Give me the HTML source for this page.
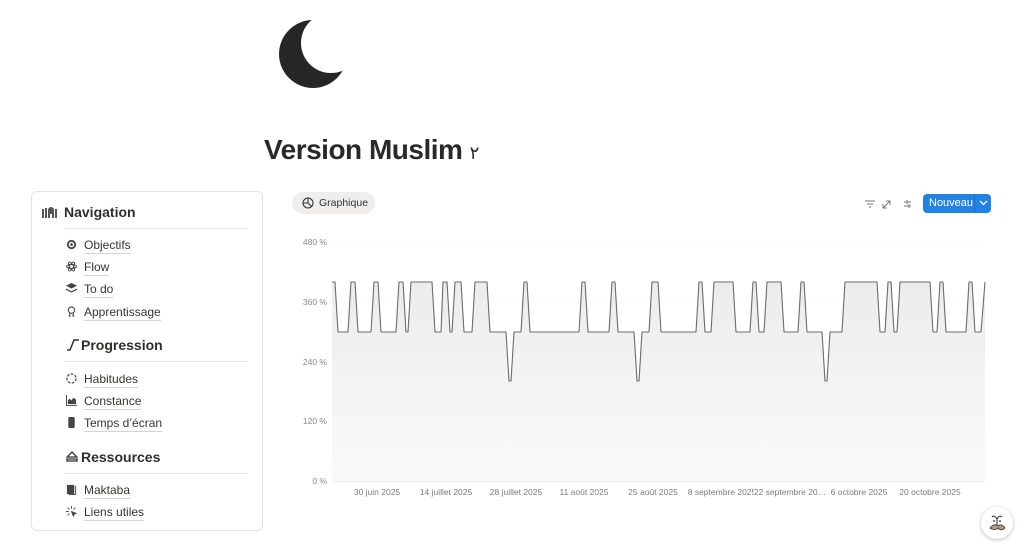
<!DOCTYPE html>
<html><head><meta charset="utf-8"><style>
body{margin:0;width:1024px;height:548px;background:#fff;font-family:"Liberation Sans",sans-serif;color:#37352f;position:relative;overflow:hidden}
.a{position:absolute}
.side{left:31px;top:191px;width:232px;height:340px;border:1px solid #e3e2e0;border-radius:6px;box-sizing:border-box}
.h{font-weight:bold;font-size:14px;color:#2f2e2a}
.sep{height:1px;background:#e8e7e4}
.it{font-size:12px;color:#37352f}
.it span{border-bottom:1px solid #d5d4d0;padding-bottom:1px}
.ic{position:absolute;left:-18px;top:1px;width:11px;height:11px}
.yl{font-size:8.5px;color:#8a8985;text-align:right;width:40px}
.xl{font-size:8.5px;color:#7d7c78;white-space:nowrap;transform:translateX(-50%)}
</style></head><body>
<svg class="a" style="left:276px;top:16px" width="76" height="76" viewBox="0 0 76 76"><defs><mask id="m"><rect width="76" height="76" fill="#fff"/><circle cx="55" cy="27" r="30" fill="#000"/></mask></defs><circle cx="37" cy="38" r="34" fill="#262626" mask="url(#m)"/></svg>
<div class="a" style="left:264px;top:134px;font-size:28px;font-weight:bold;color:#2a2925;letter-spacing:-0.5px">Version Muslim <span style="font-family:'DejaVu Sans',sans-serif;font-size:18px;font-weight:normal">٢</span></div>

<div class="a side">
 <svg class="a" style="left:10px;top:13px" width="16" height="13" viewBox="0 0 16 13"><rect x="0" y="4" width="2" height="9" fill="#555"/><rect x="3" y="3" width="2" height="10" fill="#555"/><path d="M6 13V5a3 3 0 0 1 6 0v8h-2V9H8v4Z" fill="#555"/><rect x="13" y="4" width="2" height="9" fill="#555"/></svg>
 <div class="a h" style="left:32px;top:12px">Navigation</div>
 <div class="a sep" style="left:33px;top:36px;width:183px"></div>
 <div class="a it" style="left:52px;top:46px"><svg class="ic" viewBox="0 0 12 12"><circle cx="6" cy="6" r="5" fill="#444"/><circle cx="6" cy="6" r="3" fill="#fff"/><circle cx="6" cy="6" r="1.5" fill="#444"/></svg><span>Objectifs</span></div>
 <div class="a it" style="left:52px;top:68px"><svg class="ic" viewBox="0 0 12 12" fill="none" stroke="#444" stroke-width="1"><ellipse cx="6" cy="6" rx="5.5" ry="2.2"/><ellipse cx="6" cy="6" rx="5.5" ry="2.2" transform="rotate(60 6 6)"/><ellipse cx="6" cy="6" rx="5.5" ry="2.2" transform="rotate(-60 6 6)"/></svg><span>Flow</span></div>
 <div class="a it" style="left:52px;top:90px"><svg class="ic" viewBox="0 0 12 12" fill="#444"><path d="M6 0L12 3 6 6 0 3Z"/><path d="M0 6l6 3 6-3v1.5L6 10.5 0 7.5Z"/><path d="M0 9l6 3 6-3L6 12Z"/></svg><span>To do</span></div>
 <div class="a it" style="left:52px;top:113px"><svg class="ic" viewBox="0 0 12 12" fill="none" stroke="#444" stroke-width="1.2"><circle cx="6" cy="4.5" r="3.5"/><path d="M4 8v3M8 8v3M3 11h2M7 11h2"/></svg><span>Apprentissage</span></div>
 <svg class="a" style="left:34px;top:147px" width="14" height="12" viewBox="0 0 14 12"><path d="M1 11h3L8 1h5" fill="none" stroke="#333" stroke-width="1.5"/></svg>
 <div class="a h" style="left:49px;top:145px">Progression</div>
 <div class="a sep" style="left:33px;top:169px;width:183px"></div>
 <div class="a it" style="left:52px;top:180px"><svg class="ic" viewBox="0 0 12 12" fill="none" stroke="#444" stroke-width="1.3" stroke-dasharray="3 1.5"><circle cx="6" cy="6" r="5"/></svg><span>Habitudes</span></div>
 <div class="a it" style="left:52px;top:202px"><svg class="ic" viewBox="0 0 12 12" fill="#444"><path d="M0 0h1v11h11v1H0Z"/><path d="M2 10V6l2-2 2 2 2-3 3 2v5Z"/></svg><span>Constance</span></div>
 <div class="a it" style="left:52px;top:224px"><svg class="ic" viewBox="0 0 12 12"><rect x="2.5" y="0" width="7" height="12" rx="1.5" fill="#444"/></svg><span>Temps d’écran</span></div>
 <svg class="a" style="left:34px;top:259px" width="12" height="11" viewBox="0 0 12 11"><path d="M6 1L11 6H1Z M1 8h10v2H1Z" fill="none" stroke="#333" stroke-width="1.3"/></svg>
 <div class="a h" style="left:49px;top:257px">Ressources</div>
 <div class="a sep" style="left:33px;top:281px;width:183px"></div>
 <div class="a it" style="left:52px;top:291px"><svg class="ic" viewBox="0 0 12 12" fill="#444"><path d="M1 1h8v10H1Z"/><path d="M10 2h1v10H3v-1h7Z"/></svg><span>Maktaba</span></div>
 <div class="a it" style="left:52px;top:313px"><svg class="ic" viewBox="0 0 12 12" stroke="#444" stroke-width="1"><path d="M6 0v3M0 6h3M1.8 1.8l2 2M10.2 1.8l-2 2M1.8 10.2l2-2"/><path d="M6 6l5 2-2 1-1 2Z" fill="#444"/></svg><span>Liens utiles</span></div>
</div>

<div class="a" style="left:292px;top:192px;width:83px;height:22px;background:#efeeec;border-radius:11px"></div>
<svg class="a" style="left:302px;top:197px" width="12" height="12" viewBox="0 0 12 12" fill="none" stroke="#333" stroke-width="1.1"><circle cx="6" cy="6" r="5"/><path d="M6 1v5l3.5 3.5M6 6H1"/></svg>
<div class="a" style="left:319px;top:197px;font-size:10.5px;color:#333">Graphique</div>
<svg class="a" style="left:864px;top:197px" width="48" height="14" viewBox="0 0 48 14" fill="none" stroke="#777" stroke-width="1"><path d="M1 4h10M3 7h6M5 10h2"/><path d="M22 4l4-0v4M26 4l-7 7M19 7v4h4"/><path d="M40 5h7M40 9h7M43 3v4M45 7v4"/></svg>
<div class="a" style="left:923px;top:194px;width:68px;height:19px;background:#2383e2;border-radius:4px"></div>
<div class="a" style="left:929px;top:197px;font-size:11px;color:#fff">Nouveau</div>
<div class="a" style="left:974px;top:194px;width:1px;height:19px;background:#1a6dc0"></div>
<svg class="a" style="left:979px;top:200px" width="9" height="6" viewBox="0 0 9 6"><path d="M1 1l3.5 3.5L8 1" fill="none" stroke="#fff" stroke-width="1.3"/></svg>

<svg class="a" style="left:0;top:0" width="1024" height="548">
<defs><linearGradient id="g" x1="0" y1="0" x2="0" y2="1"><stop offset="0" stop-color="#ececec"/><stop offset="1" stop-color="#fafafa"/></linearGradient></defs>
<g stroke="#ececec" stroke-dasharray="1 2" stroke-width="0.8"><path d="M332 242H985M332 302H985M332 362H985M332 421H985"/></g>
<path d="M332 481H985" stroke="#e3e3e3"/>
<path d="M332 282 L335 282 338 332 348 332 351 282 355 282 358 332 371 332 374 282 378 282 381 332 396 332 399 282 403 282 406 332 408 332 411 282 432 282 435 332 441 332 443 282 447 282 450 332 452 332 455 282 461 282 464 332 472 332 475 282 487 282 490 332 506 332 509 381 511 381 514 332 521 332 524 282 527 282 530 332 579 332 582 282 585 282 588 332 609 332 612 282 615 282 618 332 634 332 637 381 639 381 642 332 649 332 652 282 658 282 661 332 696 332 699 282 702 282 705 332 711 332 714 282 733 282 736 332 750 332 753 282 756 282 759 332 764 332 767 282 781 282 784 332 798 332 801 282 804 282 807 332 822 332 825 381 827 381 830 332 842 332 845 282 877 282 880 332 885 332 888 282 891 282 894 332 897 332 900 282 930 282 933 332 937 332 940 282 943 282 946 332 966 332 969 282 972 282 975 332 981 332 985 282 L985 481 L332 481Z" fill="url(#g)"/>
<path d="M332 282 L335 282 338 332 348 332 351 282 355 282 358 332 371 332 374 282 378 282 381 332 396 332 399 282 403 282 406 332 408 332 411 282 432 282 435 332 441 332 443 282 447 282 450 332 452 332 455 282 461 282 464 332 472 332 475 282 487 282 490 332 506 332 509 381 511 381 514 332 521 332 524 282 527 282 530 332 579 332 582 282 585 282 588 332 609 332 612 282 615 282 618 332 634 332 637 381 639 381 642 332 649 332 652 282 658 282 661 332 696 332 699 282 702 282 705 332 711 332 714 282 733 282 736 332 750 332 753 282 756 282 759 332 764 332 767 282 781 282 784 332 798 332 801 282 804 282 807 332 822 332 825 381 827 381 830 332 842 332 845 282 877 282 880 332 885 332 888 282 891 282 894 332 897 332 900 282 930 282 933 332 937 332 940 282 943 282 946 332 966 332 969 282 972 282 975 332 981 332 985 282" fill="none" stroke="#6b6b6b" stroke-width="1.1" stroke-linejoin="round"/>
</svg>
<div class="a yl" style="left:287px;top:237px">480 %</div>
<div class="a yl" style="left:287px;top:297px">360 %</div>
<div class="a yl" style="left:287px;top:357px">240 %</div>
<div class="a yl" style="left:287px;top:416px">120 %</div>
<div class="a yl" style="left:287px;top:476px">0 %</div>
<div class="a xl" style="left:377px;top:487px">30 juin 2025</div>
<div class="a xl" style="left:446px;top:487px">14 juillet 2025</div>
<div class="a xl" style="left:516px;top:487px">28 juillet 2025</div>
<div class="a xl" style="left:584px;top:487px">11 août 2025</div>
<div class="a xl" style="left:653px;top:487px">25 août 2025</div>
<div class="a xl" style="left:722px;top:487px">8 septembre 2025</div>
<div class="a xl" style="left:790px;top:487px;background:#fff">22 septembre 20…</div>
<div class="a xl" style="left:859px;top:487px">6 octobre 2025</div>
<div class="a xl" style="left:930px;top:487px">20 octobre 2025</div>

<div class="a" style="left:981px;top:507px;width:32px;height:32px;border-radius:50%;background:#fff;box-shadow:0 1px 4px rgba(0,0,0,.25)"></div>
<svg class="a" style="left:986px;top:512px" width="22" height="22" viewBox="0 0 22 22"><path d="M4 16c3-4 6-4 8-2 2-2 5-1 7 2-3 3-6 2-7 0-2 2-5 2-8 0Z" fill="#b89a84" stroke="#333" stroke-width="0.8"/><path d="M6 5c2-2 4 0 5 2M16 5c-2-2-4 0-5 2M11 7v6" fill="none" stroke="#222" stroke-width="1"/><circle cx="8" cy="9" r="0.9" fill="#222"/><circle cx="14" cy="9" r="0.9" fill="#222"/></svg>
</body></html>
